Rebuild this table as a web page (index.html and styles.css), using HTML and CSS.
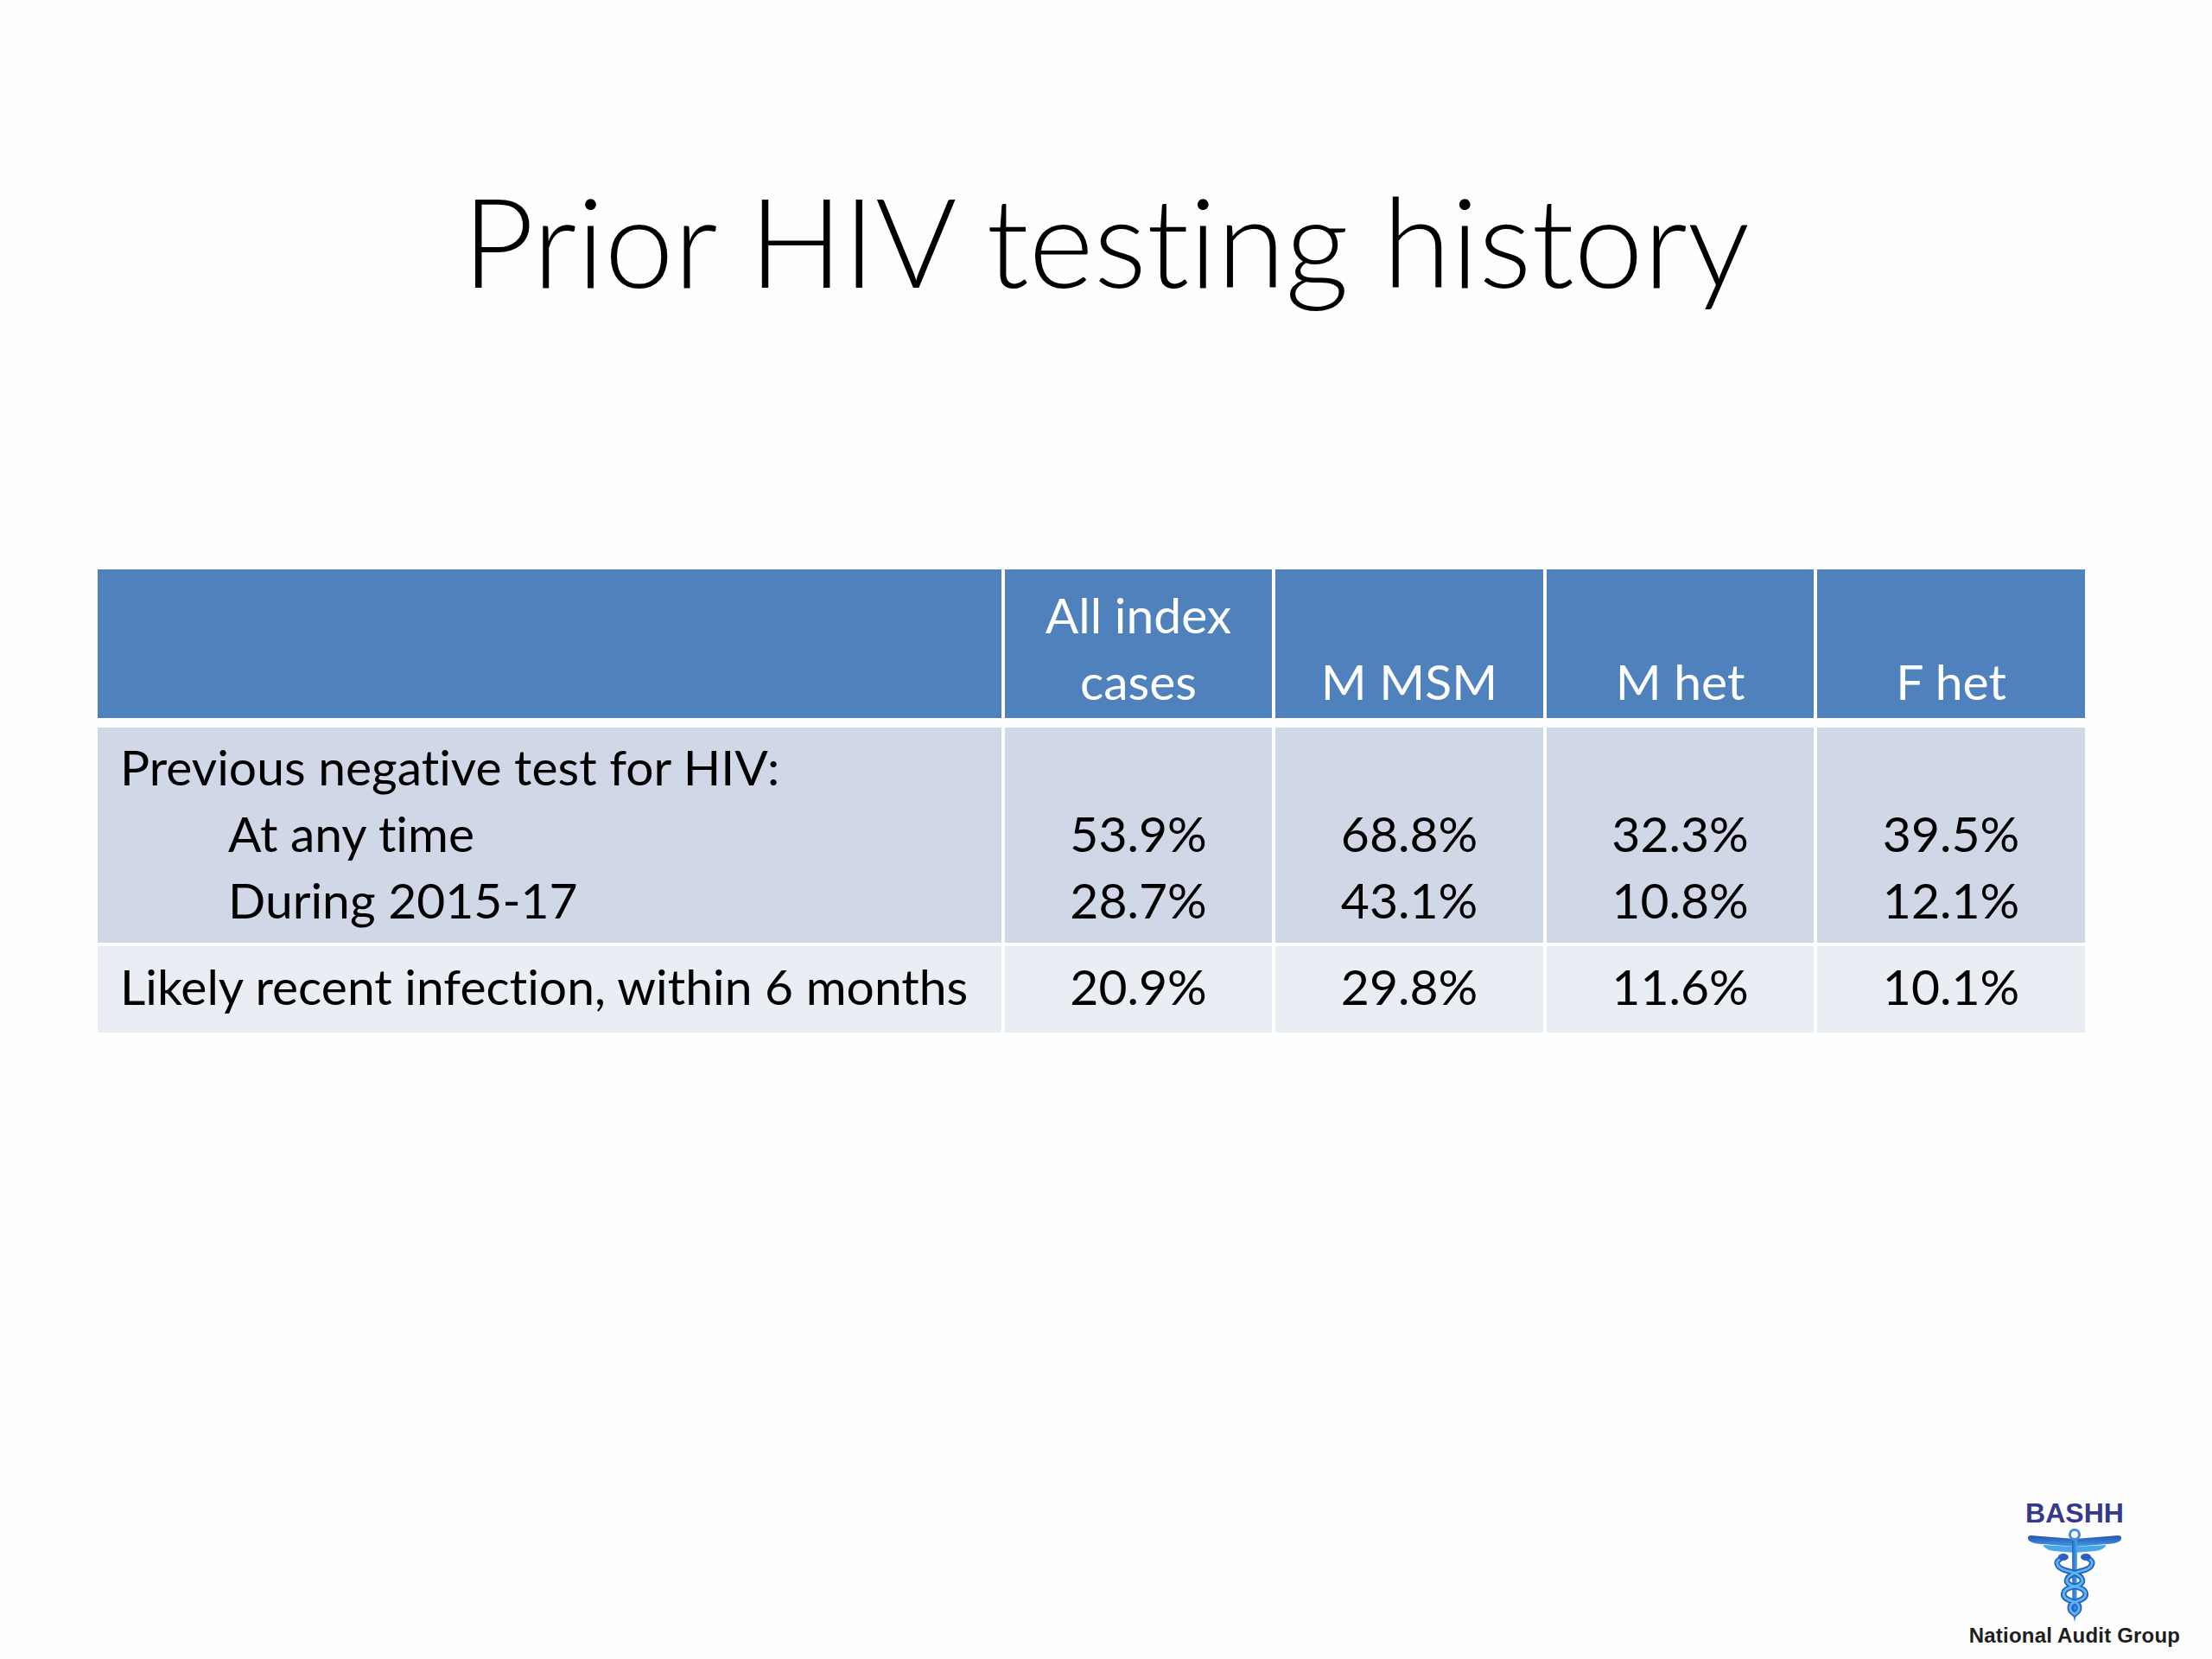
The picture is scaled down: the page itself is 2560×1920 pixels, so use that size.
FILE: index.html
```html
<!DOCTYPE html>
<html lang="en">
<head>
<meta charset="utf-8">
<title>Prior HIV testing history</title>
<link rel="stylesheet" href="styles.css">
</head>
<body>
<div class="slide">
  <h1 class="title">Prior HIV testing history</h1>

  <div class="table">
    <div class="row head">
      <div class="cell"></div>
      <div class="cell num"><span>All index</span><span>cases</span></div>
      <div class="cell num"><span>M MSM</span></div>
      <div class="cell num"><span>M het</span></div>
      <div class="cell num"><span>F het</span></div>
    </div>
    <div class="row body1">
      <div class="cell">
        <span>Previous negative test for HIV:</span>
        <span class="indent">At any time</span>
        <span class="indent">During 2015-17</span>
      </div>
      <div class="cell num"><span>53.9%</span><span>28.7%</span></div>
      <div class="cell num"><span>68.8%</span><span>43.1%</span></div>
      <div class="cell num"><span>32.3%</span><span>10.8%</span></div>
      <div class="cell num"><span>39.5%</span><span>12.1%</span></div>
    </div>
    <div class="row body2">
      <div class="cell"><span>Likely recent infection, within 6 months</span></div>
      <div class="cell num"><span>20.9%</span></div>
      <div class="cell num"><span>29.8%</span></div>
      <div class="cell num"><span>11.6%</span></div>
      <div class="cell num"><span>10.1%</span></div>
    </div>
  </div>

  <div class="footer">
    <div class="logo">
      <div class="logo-name">BASHH</div>
      <svg class="caduceus" width="112" height="110" viewBox="0 0 112 110" aria-hidden="true">
        <defs>
          <linearGradient id="wingL" x1="0" y1="0" x2="0" y2="1">
            <stop offset="0" stop-color="#2a4fb0"/>
            <stop offset="1" stop-color="#3f9ee6"/>
          </linearGradient>
          <linearGradient id="staff" x1="0" y1="0" x2="1" y2="0">
            <stop offset="0" stop-color="#2b62c4"/>
            <stop offset="1" stop-color="#47a8ea"/>
          </linearGradient>
        </defs>
        <!-- wings -->
        <path d="M56 13 L5 9 Q0 10 3 15 Q8 19 19 19 L56 22 Z" fill="url(#wingL)"/>
        <path d="M56 13 L107 9 Q112 10 109 15 Q104 19 93 19 L56 22 Z" fill="url(#wingL)"/>
        <path d="M56 22 L19 20 Q23 26 32 27 L56 29 Z" fill="#4aa6e8"/>
        <path d="M56 22 L93 20 Q89 26 80 27 L56 29 Z" fill="#4aa6e8"/>
        <!-- staff -->
        <path d="M53 12 L59 12 L58.5 99 L56 109 L53.5 99 Z" fill="url(#staff)"/>
        <!-- snakes -->
        <g fill="none" stroke-linecap="round">
          <path d="M42 35 C32 38 34 47 48 50 C68 55 70 65 56 68 C40 71 39 81 53 85 C64 88 63 96 56 100" stroke="#2b5fc0" stroke-width="6.5"/>
          <path d="M70 35 C80 38 78 47 64 50 C44 55 42 65 56 68 C72 71 73 81 59 85 C48 88 49 96 56 100" stroke="#2b5fc0" stroke-width="6.5"/>
          <path d="M42 35 C32 38 34 47 48 50 C68 55 70 65 56 68 C40 71 39 81 53 85 C64 88 63 96 56 100" stroke="#58b8f0" stroke-width="2.8"/>
          <path d="M70 35 C80 38 78 47 64 50 C44 55 42 65 56 68 C72 71 73 81 59 85 C48 88 49 96 56 100" stroke="#58b8f0" stroke-width="2.8"/>
        </g>
        <ellipse cx="43" cy="34" rx="6" ry="4" fill="#2b5fc0"/>
        <ellipse cx="69" cy="34" rx="6" ry="4" fill="#2b5fc0"/>
        <!-- top ball -->
        <circle cx="56" cy="8" r="5.5" fill="#ffffff" stroke="#3f8fdc" stroke-width="3"/>
      </svg>
      <div class="logo-sub">National Audit Group</div>
    </div>
  </div>
</div>
</body>
</html>
```

FILE: styles.css
```css
html, body {
  margin: 0;
  padding: 0;
  background: #ffffff;
}

.slide {
  width: 2560px;
  height: 1920px;
  display: flex;
  flex-direction: column;
  background: #fefefe;
  font-family: Lato, "Open Sans", "Liberation Sans", sans-serif;
  font-variant-ligatures: none;
  color: #000000;
  overflow: hidden;
}

.title {
  margin: 0;
  padding-top: 193px;
  font-size: 144px;
  line-height: 170px;
  font-weight: 300;
  text-align: center;
  color: #000000;
}

.table {
  margin-top: 296px;
  margin-left: 113px;
  width: 2300px;
  display: flex;
  flex-direction: column;
  gap: 4px;
  font-size: 57px;
  line-height: 77px;
}

.row {
  display: grid;
  grid-template-columns: 1046px 309px 310px 309px 310px;
  column-gap: 4px;
}

.cell {
  display: flex;
  flex-direction: column;
  justify-content: flex-end;
  padding: 0 24px 0 26px;
  white-space: nowrap;
}

.cell.num {
  align-items: center;
  padding: 0 4px;
}

.indent {
  padding-left: 125px;
}

.head {
  height: 172px;
  margin-bottom: 7px;
}

.head .cell {
  background: #4f81bd;
  color: #ffffff;
  padding-bottom: 4px;
}

.body1 {
  height: 249px;
}

.body1 .cell {
  background: #d0d8e8;
  padding-bottom: 11px;
}

.body2 {
  height: 100px;
}

.body2 .cell {
  background: #e9edf4;
  padding-bottom: 15px;
}

.footer {
  margin-top: auto;
  display: flex;
  justify-content: flex-end;
  padding-right: 36px;
  padding-bottom: 14px;
}

.logo {
  display: flex;
  flex-direction: column;
  align-items: center;
  width: 246px;
}

.logo-name {
  font-family: "Liberation Sans", Arial, sans-serif;
  font-weight: 700;
  font-size: 32px;
  line-height: 30px;
  color: #34398c;
}

.caduceus {
  display: block;
  margin-top: 2px;
}

.logo-sub {
  margin-top: 2px;
  font-family: "Liberation Sans", Arial, sans-serif;
  font-weight: 700;
  font-size: 24px;
  line-height: 26px;
  letter-spacing: 0.2px;
  color: #1e1e1e;
  white-space: nowrap;
}
```
